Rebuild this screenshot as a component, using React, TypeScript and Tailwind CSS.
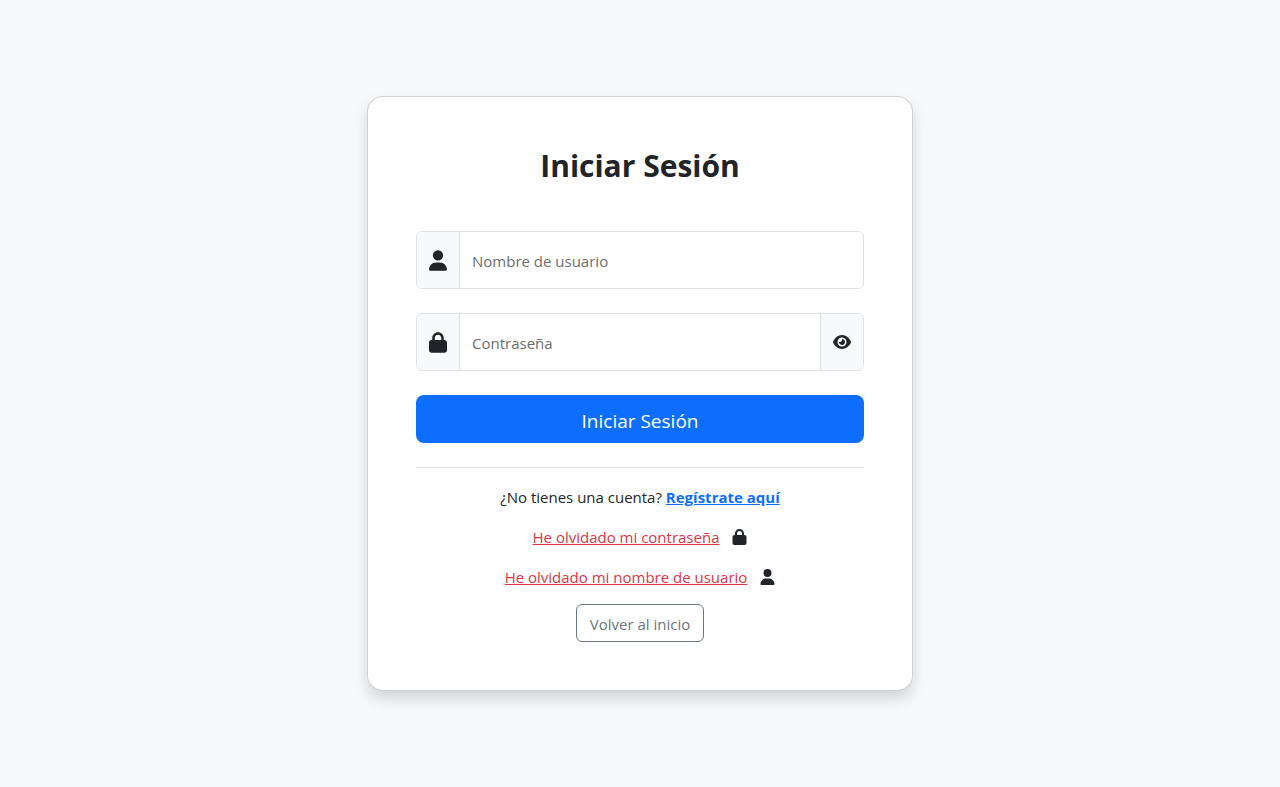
import { useState } from "react";
import type { ReactNode } from "react";
import { FaEye, FaEyeSlash, FaLock, FaUser } from "react-icons/fa6";

function FieldGroup({ children }: { children: ReactNode }) {
  return (
    <div className="mb-6 flex h-[58px] overflow-hidden rounded-md border border-[#dee2e6] bg-white">
      {children}
    </div>
  );
}

const addon = "flex shrink-0 items-center bg-[#f8f9fa] px-3";
const field =
  "min-w-0 flex-1 px-3 pt-0.5 text-[15px] text-[#212529] outline-none placeholder:text-[#6b6e71]";

export default function App() {
  const [visible, setVisible] = useState(false);

  return (
    <div className="flex min-h-screen items-center justify-center bg-[#f8f9fa] font-['Segoe_UI','Open_Sans',sans-serif] text-[15px] leading-6 text-[#212529]">
      <main className="w-full max-w-[546px] rounded-2xl border border-black/17.5 bg-white p-12 shadow-[0_8px_16px_rgba(0,0,0,0.15)]">
        <h1 className="mb-12 pt-1 text-center text-[30px] leading-[34px] font-bold">
          Iniciar Sesión
        </h1>

        <form onSubmit={(event) => event.preventDefault()}>
          <FieldGroup>
            <label htmlFor="username" className={`${addon} border-r border-[#dee2e6]`}>
              <FaUser className="h-[21px] w-[18px]" aria-hidden="true" />
            </label>
            <input
              id="username"
              type="text"
              placeholder="Nombre de usuario"
              aria-label="Nombre de usuario"
              className={field}
            />
          </FieldGroup>

          <FieldGroup>
            <label htmlFor="password" className={`${addon} border-r border-[#dee2e6]`}>
              <FaLock className="h-[21px] w-[18px]" aria-hidden="true" />
            </label>
            <input
              id="password"
              type={visible ? "text" : "password"}
              placeholder="Contraseña"
              aria-label="Contraseña"
              className={field}
            />
            <button
              type="button"
              aria-label="Mostrar contraseña"
              aria-pressed={visible}
              onClick={() => setVisible(!visible)}
              className={`${addon} cursor-pointer border-l border-[#dee2e6]`}
            >
              {visible ? (
                <FaEyeSlash className="h-4 w-[18px]" />
              ) : (
                <FaEye className="h-4 w-[18px]" />
              )}
            </button>
          </FieldGroup>

          <button
            type="submit"
            className="h-12 w-full cursor-pointer rounded-lg bg-[#0d6efd] pt-[3px] text-[19px] text-white"
          >
            Iniciar Sesión
          </button>
        </form>

        <hr className="mt-6 mb-[17px] border-[#dee0e1]" />

        <div className="flex flex-col items-center">
          <div className="mb-[15px] flex flex-col items-center gap-4">
            <p>
              ¿No tienes una cuenta?{" "}
              <a href="#registro" className="font-bold text-[#0d6efd] underline">
                Regístrate aquí
              </a>
            </p>
            <p className="flex items-center gap-[13px]">
              <a href="#contrasena" className="text-[#dc3545] underline">
                He olvidado mi contraseña
              </a>
              <FaLock className="h-4 w-[15px]" aria-hidden="true" />
            </p>
            <p className="flex items-center gap-[13px]">
              <a href="#usuario" className="text-[#dc3545] underline">
                He olvidado mi nombre de usuario
              </a>
              <FaUser className="h-4 w-[15px]" aria-hidden="true" />
            </p>
          </div>
          <a
            href="#inicio"
            className="rounded-md border border-[#6c757d] px-[13px] pt-[7px] pb-[5px] text-[#6c757d]"
          >
            Volver al inicio
          </a>
        </div>
      </main>
    </div>
  );
}
